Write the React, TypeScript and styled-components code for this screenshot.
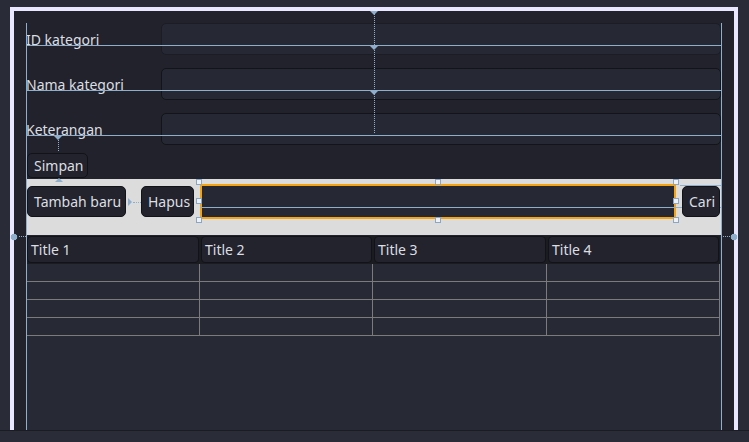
import React from "react";
import styled, { createGlobalStyle, css } from "styled-components";

const GUIDE = "#8eaecb";

const GlobalStyle = createGlobalStyle`
  html, body {
    margin: 0;
    padding: 0;
    background: #292b36;
  }
  body {
    font-family: "Noto Sans", "Open Sans", sans-serif;
    font-size: 14px;
    color: #dcdee2;
  }
`;

// small designer anchor triangle, pointing down
const anchorDown = css`
  content: "";
  position: absolute;
  width: 0;
  height: 0;
  border-left: 4px solid transparent;
  border-right: 4px solid transparent;
  border-top: 4px solid ${GUIDE};
`;

const Page = styled.div`
  width: 749px;
  height: 442px;
  display: flex;
  flex-direction: column;
  overflow: hidden;
  background: #292b36;
`;

const Frame = styled.div`
  box-sizing: border-box;
  margin: 7px 11px 0 10px;
  height: 423px;
  border: 4px solid #e9e6ff;
  border-bottom: none;
  background: #21222b;
  padding: 12px 12px 0 12px;
  display: flex;
`;

const StatusBar = styled.div`
  flex: 1;
  background: #2a2c37;
  border-top: 1px solid #1b1c22;
`;

// layout area; its left and right edges carry the blue guides
const Canvas = styled.div`
  position: relative;
  flex: 1;
  display: flex;
  flex-direction: column;

  &::before,
  &::after {
    content: "";
    position: absolute;
    top: 0;
    bottom: 0;
    width: 1px;
    background: ${GUIDE};
    z-index: 2;
  }
  &::before {
    left: 0;
  }
  &::after {
    right: 0;
  }
`;

const Form = styled.div`
  position: relative;
  display: flex;
  flex-direction: column;
  gap: 13px;

  /* dotted centre guide */
  &::before {
    content: "";
    position: absolute;
    left: 50%;
    top: -11px;
    height: 121px;
    border-left: 1px dotted ${GUIDE};
    z-index: 2;
  }
  &::after {
    ${anchorDown};
    left: calc(50% - 4px);
    top: -12px;
    z-index: 2;
  }
`;

const FieldRow = styled.div<{ $anchor?: boolean }>`
  position: relative;
  display: flex;
  align-items: center;
  height: 32px;

  /* baseline guide */
  &::after {
    content: "";
    position: absolute;
    left: 0;
    right: 0;
    top: 22px;
    height: 1px;
    background: ${GUIDE};
    z-index: 2;
  }
  ${(p) =>
    p.$anchor &&
    css`
      &::before {
        ${anchorDown};
        left: calc(50% - 4px);
        top: 23px;
        z-index: 2;
      }
    `}
`;

const Label = styled.div`
  width: 135px;
  line-height: 20px;
  padding-top: 2px;
`;

const TextField = styled.div<{ $soft?: boolean }>`
  width: 558px;
  height: 30px;
  background: #262833;
  border: 1px solid ${(p) => (p.$soft ? "#1c1d24" : "#131419")};
  border-radius: 5px;
`;

const Button = styled.div<{ $w: number; $h?: number }>`
  position: relative;
  box-sizing: border-box;
  width: ${(p) => p.$w}px;
  height: ${(p) => p.$h ?? 31}px;
  flex: none;
  display: flex;
  align-items: center;
  padding-left: 6px;
  background: #22232c;
  border: 1px solid #121318;
  border-radius: 5px;
  white-space: nowrap;
`;

const SaveButton = styled(Button)`
  margin: 8px 0 0 1px;

  /* dotted link up to the Keterangan baseline */
  &::before {
    content: "";
    position: absolute;
    left: 30px;
    top: -16px;
    height: 13px;
    border-left: 1px dotted ${GUIDE};
  }
  &::after {
    ${anchorDown};
    border-top: none;
    border-bottom: 4px solid ${GUIDE};
    left: 27px;
    bottom: -5px;
    z-index: 2;
  }
`;

const SaveAnchor = styled.span`
  position: absolute;
  left: 26px;
  top: -18px;
  ${anchorDown};
`;

const DeleteButton = styled(Button)`
  margin-left: 15px;

  &::before {
    content: "";
    position: absolute;
    left: -14px;
    top: 11px;
    width: 0;
    height: 0;
    border-top: 4px solid transparent;
    border-bottom: 4px solid transparent;
    border-left: 4px solid ${GUIDE};
  }
  &::after {
    content: "";
    position: absolute;
    left: -9px;
    top: 15px;
    width: 8px;
    border-top: 1px dotted ${GUIDE};
  }
`;

const SearchButton = styled(Button)`
  overflow: hidden;
`;

const ToolPanel = styled.div`
  position: relative;
  margin-top: 1px;
  width: 695px;
  height: 56px;
  box-sizing: border-box;
  padding-top: 5px;
  background: #dcdcdc;

  /* edge anchors with dotted links */
  &::before,
  &::after {
    content: "";
    position: absolute;
    bottom: -6px;
    width: 16px;
    height: 8px;
    z-index: 3;
  }
  &::before {
    left: -16px;
    background: radial-gradient(circle at 4px 4px, ${GUIDE} 3px, transparent 3.6px),
      repeating-linear-gradient(90deg, ${GUIDE} 0 1px, transparent 1px 2px) 9px 3px / 7px 1px no-repeat;
  }
  &::after {
    left: 696px;
    background: radial-gradient(circle at 12px 4px, ${GUIDE} 3px, transparent 3.6px),
      repeating-linear-gradient(90deg, ${GUIDE} 0 1px, transparent 1px 2px) 1px 3px / 7px 1px no-repeat;
  }
`;

const ToolRow = styled.div`
  display: flex;
  align-items: center;
  height: 35px;
`;

const SearchWrap = styled.div`
  position: relative;
  box-sizing: border-box;
  width: 476px;
  height: 35px;
  margin: 0 6px;
  border: 2px solid #f5a30f;
  background: #262833;

  /* baseline guide running to the right edge */
  &::after {
    content: "";
    position: absolute;
    left: -2px;
    top: 21px;
    width: 522px;
    height: 1px;
    background: ${GUIDE};
  }
  /* top guide of the Cari button */
  &::before {
    content: "";
    position: absolute;
    left: calc(100% + 6px);
    top: -1px;
    width: 42px;
    height: 1px;
    background: ${GUIDE};
    z-index: 3;
  }
`;

// selection handles around the selected field
const HandleFrame = styled.div`
  position: absolute;
  inset: -7px -5px -6px -6px;
  display: grid;
  grid-template-columns: repeat(3, 6px);
  grid-template-rows: repeat(3, 6px);
  justify-content: space-between;
  align-content: space-between;
  z-index: 3;
`;

const Handle = styled.div<{ $empty?: boolean }>`
  box-sizing: border-box;
  width: 6px;
  height: 6px;
  background: ${(p) => (p.$empty ? "transparent" : "#eef2f7")};
  border: 1px solid ${(p) => (p.$empty ? "transparent" : "#8aa6c4")};
`;

const TablePane = styled.div`
  margin-top: 1px;
  flex: 1;
  width: 696px;
  background: #272935;
`;

const Grid = styled.div`
  display: grid;
  grid-template-columns: 174px 173px 174px 173px;
  width: 694px;
`;

const HeaderRow = styled(Grid)`
  background: #1b1c22;
  height: 28px;
`;

const HeaderCell = styled.div`
  box-sizing: border-box;
  height: 27px;
  margin: 0 1px;
  padding-left: 3px;
  display: flex;
  align-items: center;
  background: #22232c;
  border: 1px solid #121318;
  border-radius: 4px;
`;

const Cell = styled.div`
  height: 18px;
  box-sizing: border-box;
  border-bottom: 1px solid #7b7b7b;
  border-right: 1px solid #7b7b7b;
`;

const fields = ["ID kategori", "Nama kategori", "Keterangan"];
const titles = ["Title 1", "Title 2", "Title 3", "Title 4"];

export default function App() {
  return (
    <Page>
      <GlobalStyle />
      <Frame>
        <Canvas>
          <Form>
            {fields.map((f, i) => (
              <FieldRow key={f} $anchor={i < 2}>
                <Label>{f}</Label>
                <TextField $soft={i === 0} />
              </FieldRow>
            ))}
          </Form>
          <SaveButton $w={61} $h={25}>
            <SaveAnchor />
            Simpan
          </SaveButton>
          <ToolPanel>
            <ToolRow>
              <Button $w={99} style={{ marginLeft: 1 }}>
                Tambah baru
              </Button>
              <DeleteButton $w={53}>Hapus</DeleteButton>
              <SearchWrap>
                <HandleFrame>
                  {Array.from({ length: 9 }).map((_, i) => (
                    <Handle key={i} $empty={i === 4} />
                  ))}
                </HandleFrame>
              </SearchWrap>
              <SearchButton $w={38}>Cari</SearchButton>
            </ToolRow>
          </ToolPanel>
          <TablePane>
            <HeaderRow>
              {titles.map((t) => (
                <HeaderCell key={t}>{t}</HeaderCell>
              ))}
            </HeaderRow>
            <Grid>
              {Array.from({ length: 16 }).map((_, i) => (
                <Cell key={i} />
              ))}
            </Grid>
          </TablePane>
        </Canvas>
      </Frame>
      <StatusBar />
    </Page>
  );
}
